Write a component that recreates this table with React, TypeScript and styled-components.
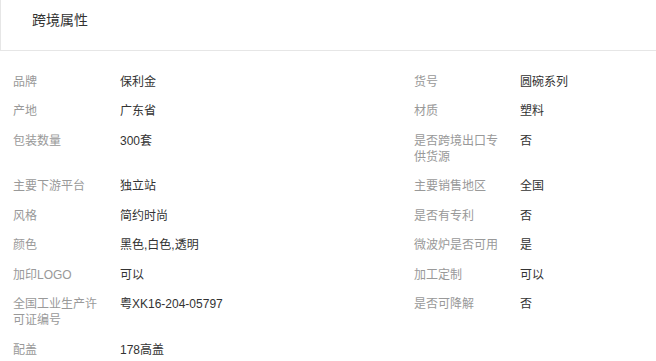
import React from "react"
import styled, { createGlobalStyle } from "styled-components"

const GlobalStyle = createGlobalStyle`
  html, body {
    margin: 0;
    padding: 0;
    background: #fff;
  }
  body {
    font-family: "Liberation Sans", "Noto Sans CJK SC", sans-serif;
    color: #333;
  }
`

const Panel = styled.section`
  width: 100%;
`

const PanelHeader = styled.header`
  display: flex;
  align-items: center;
  height: 51px;
  padding: 0 0 12px 31px;
  border-left: 1px solid #e6e6e6;
  border-bottom: 1px solid #e6e6e6;
  box-sizing: border-box;
`

const Title = styled.h3`
  margin: 0;
  font-size: 14px;
  font-weight: normal;
  color: #333;
`

const AttrGrid = styled.div`
  display: grid;
  grid-template-columns: 107px 294px 106px 1fr;
  padding: 16px 0 0 13px;
  font-size: 12px;
  line-height: 16px;
`

const Cell = styled.div<{ $label?: boolean }>`
  padding: 6.75px 14px 6.75px 0;
  color: ${(p) => (p.$label ? "#999" : "#333")};
  word-break: break-all;
`

type Attr = [string, string]

const rows: [Attr, Attr | null][] = [
  [["品牌", "保利金"], ["货号", "圆碗系列"]],
  [["产地", "广东省"], ["材质", "塑料"]],
  [["包装数量", "300套"], ["是否跨境出口专供货源", "否"]],
  [["主要下游平台", "独立站"], ["主要销售地区", "全国"]],
  [["风格", "简约时尚"], ["是否有专利", "否"]],
  [["颜色", "黑色,白色,透明"], ["微波炉是否可用", "是"]],
  [["加印LOGO", "可以"], ["加工定制", "可以"]],
  [["全国工业生产许可证编号", "粤XK16-204-05797"], ["是否可降解", "否"]],
  [["配盖", "178高盖"], null],
]

export default function App() {
  return (
    <>
      <GlobalStyle />
      <Panel>
        <PanelHeader>
          <Title>跨境属性</Title>
        </PanelHeader>
        <AttrGrid>
          {rows.map(([left, right], i) => (
            <React.Fragment key={i}>
              <Cell $label>{left[0]}</Cell>
              <Cell>{left[1]}</Cell>
              <Cell $label>{right ? right[0] : ""}</Cell>
              <Cell>{right ? right[1] : ""}</Cell>
            </React.Fragment>
          ))}
        </AttrGrid>
      </Panel>
    </>
  )
}
